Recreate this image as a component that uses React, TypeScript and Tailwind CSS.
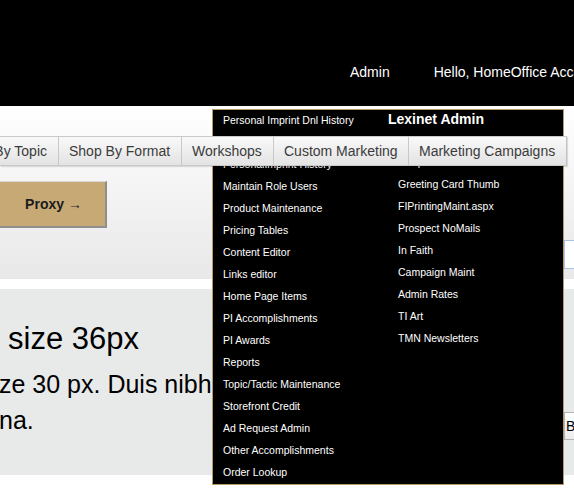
import React from 'react';

const leftItems = [
  'Personal Imprint Dnl History',
  'Personal Imprint Admin',
  'PersonalImprint History',
  'Maintain Role Users',
  'Product Maintenance',
  'Pricing Tables',
  'Content Editor',
  'Links editor',
  'Home Page Items',
  'PI Accomplishments',
  'PI Awards',
  'Reports',
  'Topic/Tactic Maintenance',
  'Storefront Credit',
  'Ad Request Admin',
  'Other Accomplishments',
  'Order Lookup',
];

const rightItems = [
  'Storefront Maint',
  'Template Maintenance',
  'Greeting Card Thumb',
  'FIPrintingMaint.aspx',
  'Prospect NoMails',
  'In Faith',
  'Campaign Maint',
  'Admin Rates',
  'TI Art',
  'TMN Newsletters',
];

const tabs = [
  { label: 'Shop By Format', w: 'w-[123px]' },
  { label: 'Workshops', w: 'w-[92px]' },
  { label: 'Custom Marketing', w: 'w-[135px]' },
  { label: 'Marketing Campaigns', w: 'w-[158px]' },
];

const App = () => {
  return (
    <div className="relative w-[574px] h-[494px] overflow-hidden bg-white font-['Liberation_Sans',Arial,sans-serif]">
      {/* header */}
      <header className="h-[106px] bg-black pt-[64px]">
        <div className="flex gap-[44px] pl-[350px] text-[14px] leading-[16px] text-white whitespace-nowrap">
          <span>Admin</span>
          <span>Hello, HomeOffice Account</span>
        </div>
      </header>

      {/* nav + proxy */}
      <section className="h-[173px] bg-gradient-to-b from-white to-[#e8e8e8] pt-[30px]">
        <nav className="relative z-20 flex h-[30px] w-[567px] border-y border-[#c9c9c9] bg-gradient-to-b from-[#f9f9f9] to-[#e3e3e3] text-[14px] text-[#3b3b3b] shadow-[1px_1px_1px_rgba(0,0,0,0.12)]">
          <div className="flex w-[58px] shrink-0 items-center justify-end overflow-hidden whitespace-nowrap pr-[11px]">
            Shop By Topic
          </div>
          {tabs.map((t) => (
            <div
              key={t.label}
              className={`${t.w} flex shrink-0 items-center whitespace-nowrap border-l border-[#c9c9c9] pl-[10px]`}
            >
              {t.label}
            </div>
          ))}
          <div className="w-px bg-[#c3c3c3]" />
        </nav>

        <div className="flex items-start justify-between">
          <button className="mt-[15px] flex h-[47px] w-[107px] items-center justify-center border-t border-[#d8d8d8] border-r-2 border-b-2 border-r-[#8f8f8f] border-b-[#8f8f8f] bg-[#c6a975] pl-[2px] text-[14px] font-bold text-[#1c1c1c]">
            Proxy →
          </button>
          <div className="mt-[74px] h-[29px] w-[10px] border-y border-l border-[#a9c4e2] bg-white" />
        </div>
      </section>

      <div className="h-[10px] bg-white" />

      {/* content panel */}
      <section className="grid h-[186px] grid-cols-[564px_1fr] bg-[#e8e9e9]">
        <div className="overflow-hidden pt-[32px] text-black">
          <h1 className="pl-[8px] text-[31px] leading-[36px] whitespace-nowrap">size 36px</h1>
          <p className="mt-[9px] -ml-[1px] text-[25px] leading-[36px] whitespace-nowrap">
            ze 30 px. Duis nibh sed turpis
            <br />
            na.
          </p>
        </div>
        <div className="pt-[123px]">
          <div className="flex h-[28px] items-center border-y border-l border-[#b5b5b5] bg-gradient-to-b from-white to-[#ececec] pl-[1px] text-[14px] text-black whitespace-nowrap">
            Button
          </div>
        </div>
      </section>

      {/* admin dropdown */}
      <div className="absolute left-[212px] top-[109px] z-10 flex h-[376px] w-[352px] border border-[#b89c68] bg-black pl-[10px] text-[10.5px] text-white">
        <ul className="w-[175px] shrink-0">
          {leftItems.map((item) => (
            <li key={item} className="flex h-[22px] items-center whitespace-nowrap">
              {item}
            </li>
          ))}
        </ul>
        <ul className="-mt-[2px]">
          <li className="-ml-[10px] flex h-[22px] items-center pt-[1px] text-[14px] font-bold whitespace-nowrap">
            Lexinet Admin
          </li>
          {rightItems.map((item) => (
            <li key={item} className="flex h-[22px] items-center whitespace-nowrap">
              {item}
            </li>
          ))}
        </ul>
      </div>
    </div>
  );
};

export default App;
